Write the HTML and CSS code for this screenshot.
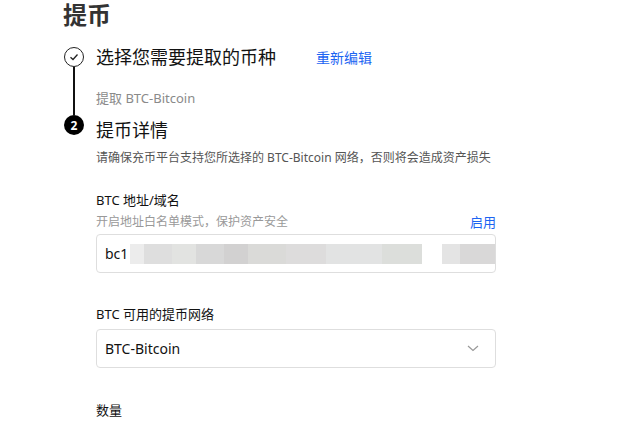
FILE: index.html
```html
<!DOCTYPE html>
<html lang="zh-CN">
<head>
    <meta charset="UTF-8">
    <title>提币</title>
    <link rel="stylesheet" href="styles.css">
</head>
<body>
    <div class="page">
        <h1 class="title">提币</h1>

        <div class="step done">
            <div class="rail">
                <span class="dot check">
                    <svg width="10" height="8" viewBox="0 0 10 8"><path d="M1.5 4.2 L4 6.5 L8.5 1.5" fill="none" stroke="#222" stroke-width="1.3"/></svg>
                </span>
                <span class="line"></span>
            </div>
            <div class="body">
                <div class="step-head">
                    <span class="step-title">选择您需要提取的币种</span>
                    <a class="link edit" href="#">重新编辑</a>
                </div>
                <div class="picked">提取 BTC-Bitcoin</div>
            </div>
        </div>

        <div class="step">
            <div class="rail">
                <span class="dot num">2</span>
            </div>
            <div class="body">
                <div class="step-head">
                    <span class="step-title">提币详情</span>
                </div>
                <p class="hint">请确保充币平台支持您所选择的 BTC-Bitcoin 网络，否则将会造成资产损失</p>

                <div class="field">
                    <label class="label">BTC 地址/域名</label>
                    <div class="sub-row">
                        <span>开启地址白名单模式，保护资产安全</span>
                        <a class="link" href="#">启用</a>
                    </div>
                    <div class="box">
                        <span class="value">bc1</span>
                        <span class="blur">
                            <i class="b1"></i><i class="b2"></i><i class="b3"></i><i class="b4"></i><i class="b5"></i><i class="b6"></i><i class="b7"></i><i class="b8"></i><i class="b9"></i><i class="gap"></i><i class="b10"></i><i class="b11"></i>
                        </span>
                    </div>
                </div>

                <div class="field net">
                    <label class="label">BTC 可用的提币网络</label>
                    <div class="box select">
                        <span class="value">BTC-Bitcoin</span>
                        <svg class="chev" width="12" height="7" viewBox="0 0 12 7"><path d="M1 1 L6 5.5 L11 1" fill="none" stroke="#999" stroke-width="1.2"/></svg>
                    </div>
                </div>

                <div class="field qty">
                    <label class="label">数量</label>
                </div>
            </div>
        </div>
    </div>
</body>
</html>
```

FILE: styles.css
```css
body {
    margin: 0;
    background: #fff;
    font-family: "Noto Sans", "Noto Sans CJK SC", sans-serif;
    color: #121212;
}
.page {
    padding: 0 0 0 63px;
}
.title {
    margin: 0;
    font-size: 24px;
    font-weight: 700;
    line-height: 30px;
    color: #333;
    height: 42px;
}
.step {
    display: flex;
}
.rail {
    display: flex;
    flex-direction: column;
    align-items: center;
    margin-left: 1px;
    width: 20px;
    margin-right: 12px;
}
.dot {
    width: 20px;
    height: 20px;
    border-radius: 50%;
    box-sizing: border-box;
    display: flex;
    align-items: center;
    justify-content: center;
    flex-shrink: 0;
}
.check {
    border: 1px solid #222;
    margin-top: 5px;
}
.num {
    background: #000;
    color: #fff;
    font-size: 12px;
    font-weight: 700;
}
.line {
    width: 2px;
    background: #111;
    flex: 1;
}
.body {
    flex: 1;
}
.step-head {
    display: flex;
    align-items: center;
    height: 30px;
}
.step-title {
    font-size: 18px;
    line-height: 30px;
}
.link {
    color: #1c64f2;
    text-decoration: none;
    font-size: 13px;
}
.edit {
    margin-left: 40px;
    font-size: 14px;
}
.picked {
    margin-top: 16px;
    font-size: 13px;
    color: #8a8a8a;
    height: 18px;
    padding-bottom: 9px;
}
.hint {
    margin: 4px 0 0;
    font-size: 12px;
    color: #555;
    line-height: 18px;
}
.field {
    width: 400px;
}
.label {
    display: block;
    font-size: 13px;
    line-height: 18px;
    margin-top: 24px;
}
.sub-row {
    display: flex;
    justify-content: space-between;
    align-items: center;
    font-size: 12px;
    color: #999;
    line-height: 18px;
    margin-top: 4px;
}
.box {
    margin-top: 3px;
    height: 39px;
    box-sizing: border-box;
    border: 1px solid #dedede;
    border-radius: 4px;
    display: flex;
    align-items: center;
    padding: 0 8px;
    overflow: hidden;
}
.value {
    font-size: 14px;
}
.blur {
    display: flex;
    height: 20px;
    margin-left: 2px;
    flex: 1;
    margin-right: -8px;
}
.blur i {
    display: block;
    height: 100%;
}
.b1 { width: 14px; background: #ececec; }
.b2 { width: 28px; background: #dedede; }
.b3 { width: 24px; background: #e2e3e1; }
.b4 { width: 28px; background: #d8d8d8; }
.b5 { width: 24px; background: #d2d1d1; }
.b6 { width: 38px; background: #dadad8; }
.b7 { width: 40px; background: #dddcdc; }
.b8 { width: 56px; background: #e2e3e3; }
.b9 { width: 40px; background: #dcdedb; }
.b10 { width: 18px; background: #e4e4e4; }
.gap { width: 20px; background: #fff; }
.b11 { width: 40px; background: #d9d8d8; }
.net .label {
    margin-top: 32px;
}
.select {
    justify-content: space-between;
    margin-top: 6px;
}
.chev {
    margin-right: 8px;
}
.qty .label {
    margin-top: 33px;
}
```
